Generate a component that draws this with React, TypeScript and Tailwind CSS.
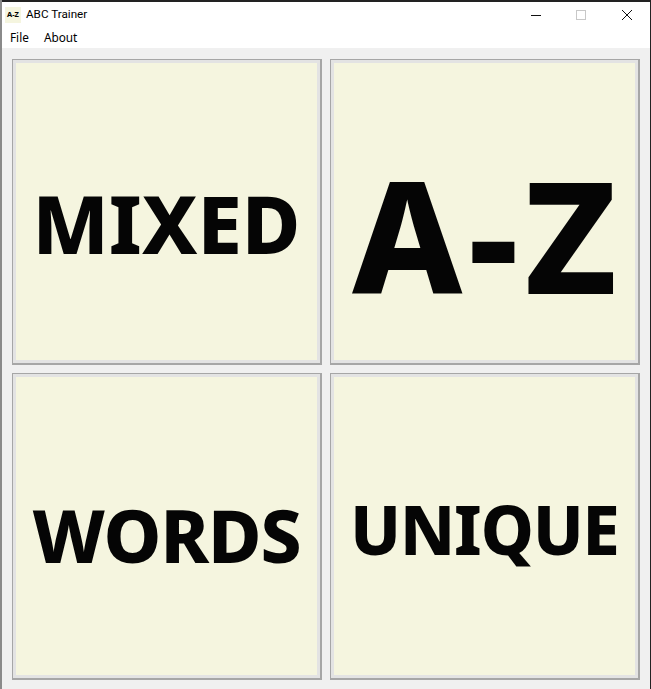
function Tile({ label, textClass }: { label: string; textClass: string }) {
  return (
    <button className="flex min-h-0 min-w-0 items-center justify-center border border-b-2 border-r-2 border-[#a6a6a6] bg-[#e3e3e3] p-[3px]">
      <span className={`flex h-full w-full items-center justify-center bg-[#f5f5df] font-extrabold text-[#050505] ${textClass}`}>
        {label}
      </span>
    </button>
  );
}

export default function App() {
  return (
    <div className="flex h-[689px] w-[651px] flex-col overflow-hidden border-l-2 border-r border-l-[#8a8a8a] border-r-[#222222] bg-[#f0f0f0]" style={{ fontFamily: '"Noto Sans", sans-serif' }}>
      <div className="h-[2px] shrink-0 bg-[#222222]" />
      <div className="flex h-[26px] shrink-0 items-center bg-white pl-[3px]">
        <div className="flex h-[16px] w-[16px] items-center justify-center bg-[#f5f5df] text-[7.5px] font-bold leading-none text-black">A-Z</div>
        <span className="ml-[5px] text-[11.7px] text-black" style={{ fontFamily: 'Roboto, sans-serif' }}>ABC Trainer</span>
        <div className="ml-auto flex items-center">
          <svg width="12" height="12" viewBox="0 0 12 12" className="mr-[33px]"><path d="M1 6.5H11" stroke="#111" strokeWidth="1" /></svg>
          <svg width="12" height="12" viewBox="0 0 12 12" className="mr-[34px]"><rect x="1.5" y="1.5" width="9" height="9" fill="none" stroke="#c8c8c8" /></svg>
          <svg width="12" height="12" viewBox="0 0 12 12" className="mr-[17px]"><path d="M1 1L11 11M11 1L1 11" stroke="#111" strokeWidth="1" /></svg>
        </div>
      </div>
      <div className="flex h-[20px] shrink-0 items-center gap-[15px] bg-white pl-[8px] text-[11.8px] text-black">
        <span>File</span>
        <span>About</span>
      </div>
      <div className="grid flex-1 grid-cols-2 grid-rows-[306px_307px] gap-[8px] pb-[9px] pl-[10px] pr-[10px] pt-[11px]">
        <Tile label="MIXED" textClass="pt-[22px] text-[80px] leading-none" />
        <Tile label="A-Z" textClass="pt-[44px] pl-[6px] text-[156px] leading-none tracking-[6px]" />
        <Tile label="WORDS" textClass="pt-[17px] text-[73px] leading-none tracking-[-1px]" />
        <Tile label="UNIQUE" textClass="pt-[7px] text-[67px] leading-none tracking-[-1px]" />
      </div>
    </div>
  );
}
